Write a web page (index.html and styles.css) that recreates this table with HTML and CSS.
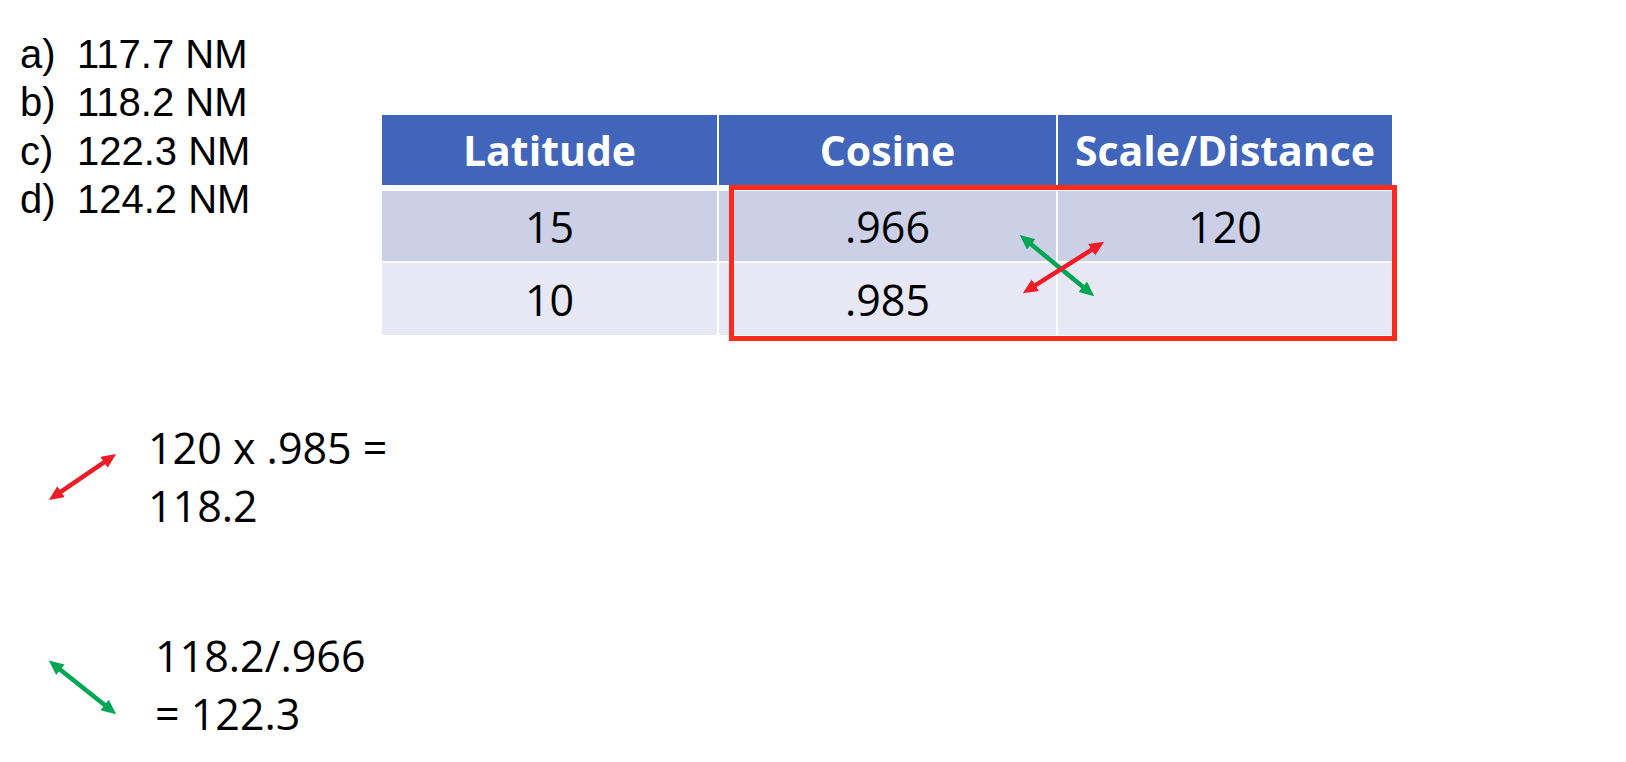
FILE: index.html
```html
<!DOCTYPE html>
<html lang="en">
<head>
<meta charset="utf-8">
<title>Latitude scale</title>
<link rel="stylesheet" href="styles.css">
</head>
<body>
<svg class="defs" width="0" height="0" aria-hidden="true">
  <defs>
    <marker id="head-red" viewBox="0 0 10 10" refX="3" refY="4.5" markerWidth="3.3" markerHeight="3.3" orient="auto-start-reverse" markerUnits="strokeWidth">
      <path d="M0,0 L10,4.5 L0,9 z" fill="#ee1c25"/>
    </marker>
    <marker id="head-green" viewBox="0 0 10 10" refX="3" refY="4.5" markerWidth="3.3" markerHeight="3.3" orient="auto-start-reverse" markerUnits="strokeWidth">
      <path d="M0,0 L10,4.5 L0,9 z" fill="#00a651"/>
    </marker>
  </defs>
</svg>
<div class="slide">
  <div class="top">
    <ol class="choices">
      <li><span class="tag">a)</span>117.7 NM</li>
      <li><span class="tag">b)</span>118.2 NM</li>
      <li><span class="tag">c)</span>122.3 NM</li>
      <li><span class="tag">d)</span>124.2 NM</li>
    </ol>
    <div class="table-wrap">
      <div class="thead">
        <div class="th">Latitude</div>
        <div class="th">Cosine</div>
        <div class="th">Scale/Distance</div>
      </div>
      <div class="row row-odd">
        <div class="td">15</div>
        <div class="td">.966</div>
        <div class="td">120</div>
      </div>
      <div class="row row-even">
        <div class="td">10</div>
        <div class="td">.985</div>
        <div class="td"></div>
      </div>
      <div class="highlight"></div>
      <svg class="cross" width="1009" height="230" aria-hidden="true">
        <line x1="645.8" y1="126.5" x2="704.2" y2="174.6" class="arrow-green" marker-start="url(#head-green)" marker-end="url(#head-green)"/>
        <line x1="649.6" y1="172.6" x2="713.4" y2="132.4" class="arrow-red" marker-start="url(#head-red)" marker-end="url(#head-red)"/>
      </svg>
    </div>
  </div>
  <div class="formula formula-first">
    <svg class="formula-arrow" width="80" height="95" aria-hidden="true">
      <line x1="17.4" y1="75.2" x2="67.6" y2="40.8" class="arrow-red" marker-start="url(#head-red)" marker-end="url(#head-red)"/>
    </svg>
    <div class="formula-text">120 x .985 =<br>118.2</div>
  </div>
  <div class="formula formula-second">
    <svg class="formula-arrow" width="80" height="95" aria-hidden="true">
      <line x1="16.9" y1="40" x2="68.1" y2="80.7" class="arrow-green" marker-start="url(#head-green)" marker-end="url(#head-green)"/>
    </svg>
    <div class="formula-text">118.2/.966<br>= 122.3</div>
  </div>
</div>
</body>
</html>
```
FILE: styles.css
```css
html, body {
  margin: 0;
  padding: 0;
  background: #ffffff;
}

body {
  width: 1626px;
  height: 762px;
  overflow: hidden;
  color: #000;
}

.defs {
  position: absolute;
  width: 0;
  height: 0;
}

.slide {
  display: flex;
  flex-direction: column;
}

.top {
  display: flex;
  align-items: flex-start;
}

.choices {
  list-style: none;
  margin: 0;
  width: 382px;
  flex: none;
  box-sizing: border-box;
  padding: 30px 0 0 20px;
  font-family: "Liberation Sans", Arial, sans-serif;
  font-size: 40px;
  line-height: 48.3px;
}

.choices li {
  white-space: nowrap;
}

.tag {
  display: inline-block;
  width: 57px;
}

.table-wrap {
  position: relative;
  margin-top: 115px;
  width: 1010px;
}

.thead,
.row {
  display: grid;
  grid-template-columns: 335px 337px 334px;
  column-gap: 2px;
}

.thead {
  height: 70px;
  margin-bottom: 6px;
}

.th {
  background: #4065bb;
  color: #ffffff;
  font-family: "Open Sans", sans-serif;
  font-weight: 700;
  font-size: 41px;
  display: flex;
  align-items: center;
  justify-content: center;
}

.row-odd {
  height: 70px;
  margin-bottom: 2px;
}

.row-even {
  height: 72px;
}

.row-odd .td {
  background: #cbd0e7;
}

.row-even .td {
  background: #e7e8f4;
}

.td {
  font-family: "Open Sans", sans-serif;
  font-size: 43px;
  display: flex;
  align-items: center;
  justify-content: center;
}

.highlight {
  position: absolute;
  left: 347px;
  top: 70px;
  width: 668px;
  height: 156px;
  box-sizing: border-box;
  border: 5px solid #fb2b1d;
}

.cross {
  position: absolute;
  left: 0;
  top: 0;
  overflow: visible;
  pointer-events: none;
}

.arrow-red {
  stroke: #ee1c25;
  stroke-width: 4.5;
}

.arrow-green {
  stroke: #00a651;
  stroke-width: 4.5;
}

.formula {
  display: flex;
  align-items: flex-start;
  padding-left: 40px;
}

.formula-first {
  margin-top: 84px;
}

.formula-second {
  margin-top: 92px;
}

.formula-arrow {
  flex: none;
}

.formula-text {
  font-family: "Open Sans", sans-serif;
  font-size: 43px;
  line-height: 58px;
  margin-left: 28px;
}

.formula-second .formula-text {
  margin-left: 35px;
}
```
